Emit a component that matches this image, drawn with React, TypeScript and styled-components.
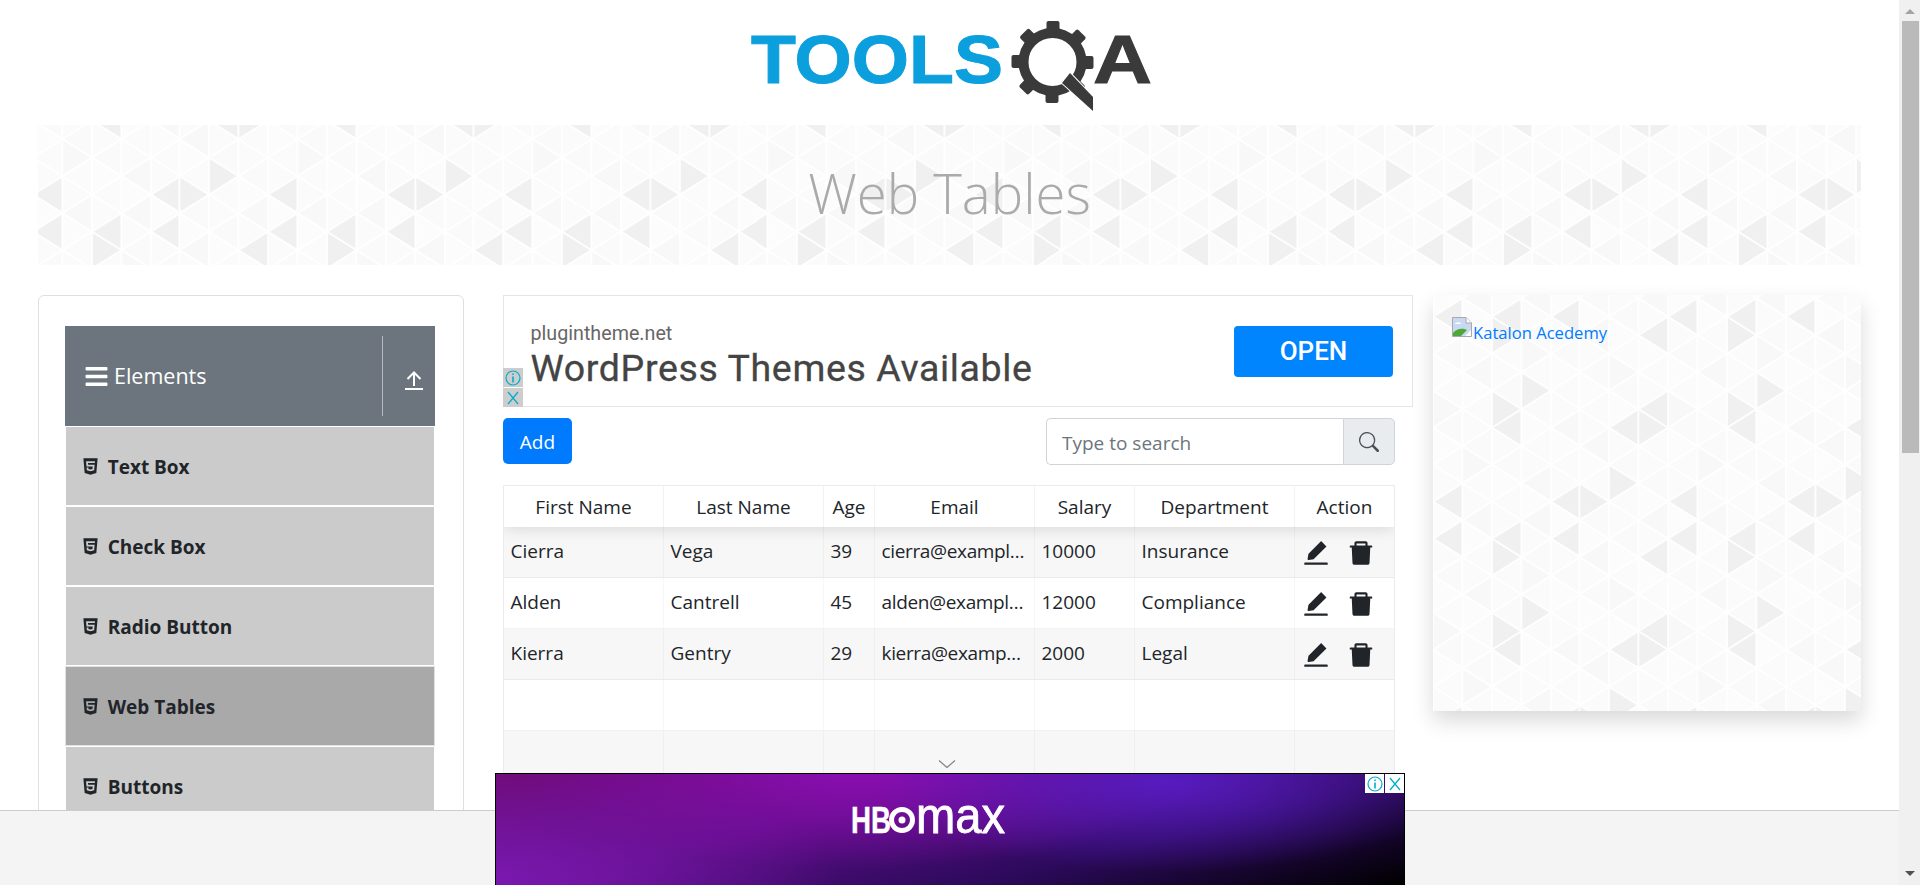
import React from "react";
import styled, { createGlobalStyle } from "styled-components";
import { FaBars, FaHtml5 } from "react-icons/fa";
import { AiFillEdit, AiFillDelete } from "react-icons/ai";
import { BsSearch } from "react-icons/bs";

const UI = `"Open Sans", "Noto Sans", sans-serif`;

const buildTile = () => {
  const cw = 29.4;
  const rh = 18.5;
  const r0 = 21.7;
  const dark = new Set(["0,0", "2,0", "4,0", "3,4", "2,5", "2,6", "6,6", "7,6", "0,10", "4,10", "5,10", "6,9", "2,1", "7,1", "7,5"]);
  const mid = new Set(["1,3", "3,2", "5,7", "1,8", "3,9", "6,3", "0,5", "4,6", "7,11", "5,1", "1,11", "3,11"]);
  let polys = "";
  for (let c = 0; c < 8; c++) {
    for (let r = -1; r < 13; r++) {
      const y = r0 + rh * r;
      const x0 = c * cw;
      const x1 = x0 + cw;
      const rr = (r + 12) % 12;
      const key = `${c},${rr}`;
      const shade = (c * 7 + rr * 5) % 4;
      const fill = dark.has(key) ? "#f0f0f0" : mid.has(key) ? "#f8f8f8" : ["#fbfbfb", "#fbfbfb", "#fafafa", "#fcfcfc"][shade];
      const pts = (r + c) % 2 === 0
        ? `${x0},${y} ${x1},${y - rh} ${x1},${y + rh}`
        : `${x0},${y - rh} ${x0},${y + rh} ${x1},${y}`;
      polys += `<polygon points='${pts}' fill='${fill}'/>`;
    }
  }
  const svg = `<svg xmlns='http://www.w3.org/2000/svg' width='235.2' height='222' viewBox='0 0 235.2 222'><rect width='235.2' height='222' fill='#fbfbfb'/><g stroke='#ffffff' stroke-opacity='0.85' stroke-width='1.8' stroke-linejoin='round'>${polys}</g></svg>`;
  return `url("data:image/svg+xml,${encodeURIComponent(svg)}")`;
};
const tile = buildTile();

const Global = createGlobalStyle`
  html, body { margin: 0; padding: 0; height: 100%; overflow: hidden; background: #fff; }
  body { font-family: ${UI}; color: #212529; }
  * { box-sizing: border-box; }
`;

const Viewport = styled.div`
  display: flex;
  height: 885px;
  width: 1920px;
  overflow: hidden;
`;
const Page = styled.div`
  position: relative;
  flex: 0 0 1899px;
  height: 885px;
  overflow: hidden;
`;
const Scrollbar = styled.div`
  flex: 0 0 21px;
  background: #f0f0f0;
  display: flex;
  flex-direction: column;
  align-items: center;
  padding: 0 0 0 1px;
`;
const ScrollArrow = styled.div<{ $down?: boolean }>`
  width: 0;
  height: 0;
  border-left: 5px solid transparent;
  border-right: 5px solid transparent;
  ${(p) => (p.$down ? "border-top: 5px solid #505050; margin-top: 418px;" : "border-bottom: 5px solid #a3a3a3; margin: 9px 0 7px;")}
`;
const ScrollThumb = styled.div`
  width: 17px;
  height: 432px;
  background: #bababa;
`;

const Header = styled.header`
  height: 125px;
  padding: 21px 0 0 4px;
  display: flex;
  justify-content: center;
  align-items: flex-start;
`;
const LogoText = styled.text<{ $dark?: boolean }>`
  font-family: "Liberation Sans", sans-serif;
  font-weight: 700;
  font-size: 69px;
  fill: ${(p) => (p.$dark ? "#3a3a3a" : "#0b9fdd")};
  stroke: ${(p) => (p.$dark ? "#3a3a3a" : "#0b9fdd")};
  stroke-width: 1;
`;

const Banner = styled.div`
  margin: 0 38px;
  height: 140px;
  background-image: ${tile};
  background-position: -5px 85px;
  display: flex;
  align-items: center;
  justify-content: center;
  padding-bottom: 4px;
`;
const Title = styled.h1`
  margin: 0;
  font-family: ${UI};
  font-weight: 300;
  font-size: 54.5px;
  line-height: 1;
  color: #aaaaaa;
`;

const Main = styled.main`
  display: grid;
  grid-template-columns: 426px 949px 448px;
  padding: 30px 0 0 38px;
`;

const Sidebar = styled.aside`
  border: 1px solid #dfdfdf;
  border-radius: 6px;
  padding: 30px 28px 0 26px;
  height: 700px;
`;
const GroupHeader = styled.div`
  height: 100px;
  background: #6c757d;
  color: #fff;
  display: flex;
  align-items: center;
  padding-left: 19px;
  font-size: 21.5px;
`;
const GroupLabel = styled.span`
  flex: 1;
  margin-left: 5px;
  line-height: 1;
`;
const GroupToggle = styled.div`
  flex: 0 0 53px;
  height: 80px;
  border-left: 1px solid rgba(255, 255, 255, 0.5);
  display: flex;
  align-items: center;
  padding: 8px 0 0 22px;
`;
const Items = styled.ul`
  list-style: none;
  margin: 0;
  padding: 0;
  display: flex;
  flex-direction: column;
`;
const Item = styled.li<{ $active?: boolean }>`
  display: flex;
  align-items: center;
  gap: 7.7px;
  font-weight: 700;
  font-size: 19px;
  color: #212529;
  background: ${(p) => (p.$active ? "#a9a9a9" : "#cbcbcb")};
  height: ${(p) => (p.$active ? "80px" : "78px")};
  margin: ${(p) => (p.$active ? "0" : "1px")};
  padding-left: 15px;
  border: ${(p) => (p.$active ? "1px solid #dee2e6" : "0")};
  & > span { padding-top: 2px; }
`;

const Middle = styled.section`
  margin-left: 39px;
  width: 910px;
  display: flex;
  flex-direction: column;
`;
const AdTop = styled.div`
  position: relative;
  height: 112px;
  border: 1px solid #e6e6e6;
  display: flex;
  align-items: center;
  justify-content: space-between;
  padding: 0 19px 0 26.5px;
  font-family: Roboto, sans-serif;
`;
const AdText = styled.div`
  display: flex;
  flex-direction: column;
  margin-top: 10px;
`;
const AdDomain = styled.span`
  font-size: 19.7px;
  line-height: 22px;
  color: #666;
`;
const AdHeadline = styled.span`
  font-size: 37.5px;
  letter-spacing: 0.63px;
  line-height: 44px;
  color: #444;
  margin-top: 1px;
  -webkit-text-stroke: 0.3px #444;
`;
const AdOpen = styled.div`
  width: 159px;
  height: 51px;
  border-radius: 4px;
  background: #0085ff;
  color: #fff;
  font-size: 26px;
  font-weight: 500;
  display: flex;
  align-items: center;
  justify-content: center;
`;
const AdTopMarks = styled.div`
  position: absolute;
  left: -1px;
  bottom: -1px;
  display: flex;
  flex-direction: column;
  gap: 1px;
`;
const AdMark = styled.div<{ $light?: boolean }>`
  width: ${(p) => (p.$light ? "19px" : "20px")};
  height: 19px;
  background: ${(p) => (p.$light ? "#fff" : "#cdcdcd")};
  display: flex;
  align-items: center;
  justify-content: center;
`;

const Toolbar = styled.div`
  width: 892px;
  margin-top: 11px;
  display: flex;
  justify-content: space-between;
  align-items: flex-start;
`;
const AddButton = styled.button`
  width: 69px;
  height: 46px;
  border: 0;
  border-radius: 5px;
  background: #007bff;
  color: #fff;
  font-family: ${UI};
  font-size: 19px;
  padding: 1px 0 0;
`;
const Search = styled.div`
  width: 349px;
  height: 47px;
  display: flex;
`;
const SearchInput = styled.input`
  flex: 1;
  min-width: 0;
  border: 1px solid #ced4da;
  border-right: 0;
  border-radius: 5px 0 0 5px;
  padding: 2px 16px 0 15px;
  font-family: ${UI};
  font-size: 19px;
  outline: 0;
  &::placeholder { color: #6c757d; opacity: 1; }
`;
const SearchAddon = styled.div`
  flex: 0 0 52px;
  background: #e9ecef;
  border: 1px solid #ced4da;
  border-radius: 0 5px 5px 0;
  display: flex;
  align-items: center;
  justify-content: center;
  color: #495057;
`;

const Table = styled.div`
  position: relative;
  width: 892px;
  margin-top: 20px;
  border: 1px solid rgba(0, 0, 0, 0.08);
  border-bottom: 0;
  font-size: 19px;
  overflow: hidden;
`;
const HeadRow = styled.div`
  position: relative;
  z-index: 1;
  display: flex;
  height: 41px;
  background: #fff;
  box-shadow: 0 2px 15px rgba(0, 0, 0, 0.13);
`;
const HeadCell = styled.div<{ $w: number }>`
  flex: 0 0 ${(p) => p.$w}px;
  display: flex;
  align-items: center;
  justify-content: center;
  padding-top: 1px;
  border-right: 1px solid rgba(0, 0, 0, 0.05);
  &:last-child { border-right: 0; }
`;
const Row = styled.div<{ $odd?: boolean }>`
  display: flex;
  height: 51px;
  background: ${(p) => (p.$odd ? "#f7f7f7" : "#fff")};
  border-bottom: 1px solid rgba(0, 0, 0, 0.05);
`;
const Cell = styled.div<{ $w: number; $tight?: boolean }>`
  flex: 0 0 ${(p) => p.$w}px;
  min-width: 0;
  padding: 0 6px 0 6.5px;
  line-height: 48px;
  white-space: nowrap;
  letter-spacing: ${(p) => (p.$tight ? "-0.35px" : "0")};
  border-right: 1px solid rgba(0, 0, 0, 0.03);
  &:last-child { border-right: 0; }
`;
const Actions = styled.div<{ $w: number }>`
  flex: 0 0 ${(p) => p.$w}px;
  display: flex;
  align-items: center;
  gap: 15px;
  padding: 2px 0 0 6px;
`;
const Chevron = styled.svg`
  position: absolute;
  left: 434px;
  top: 274px;
  z-index: 1;
`;

const Aside = styled.aside`
  margin-left: 20px;
  width: 428px;
  height: 416px;
  background-image: ${tile};
  box-shadow: 0 10px 20px rgba(0, 0, 0, 0.15);
  padding: 22px 19px;
`;
const PromoLink = styled.a`
  display: flex;
  align-items: flex-start;
  color: #007bff;
  font-size: 16.6px;
  line-height: 26px;
  text-decoration: none;
  & > span { margin: 3px 0 0 1px; }
`;

const Footer = styled.footer`
  position: absolute;
  left: 0;
  right: 0;
  bottom: 0;
  z-index: 2;
  height: 75px;
  background: #f4f4f4;
  border-top: 1px solid #cccccc;
  display: flex;
  justify-content: center;
  align-items: flex-end;
`;
const AdBottom = styled.div`
  position: relative;
  flex: 0 0 910px;
  margin-left: 1px;
  height: 112px;
  border: 1px solid #000;
  border-bottom: 0;
  padding: 13px 0 0 355px;
  background:
    radial-gradient(ellipse 32% 80% at 74% 8%, rgba(88, 28, 196, 0.95) 0%, rgba(88, 28, 196, 0) 100%),
    radial-gradient(ellipse 38% 90% at 40% -5%, rgba(140, 14, 178, 1) 0%, rgba(140, 14, 178, 0) 100%),
    radial-gradient(ellipse 38% 110% at 0% 95%, rgba(122, 24, 174, 1) 0%, rgba(122, 24, 174, 0) 100%),
    linear-gradient(165deg, #700a72 0%, #5c0d84 35%, #2c0a5c 68%, #000 100%);
`;
const HboText = styled.text<{ $thin?: boolean }>`
  font-family: "Liberation Sans", sans-serif;
  font-weight: ${(p) => (p.$thin ? 400 : 700)};
  font-size: ${(p) => (p.$thin ? "50px" : "36px")};
  fill: #fff;
  stroke: #fff;
  stroke-width: ${(p) => (p.$thin ? 0.8 : 0.4)};
`;
const AdCorner = styled.div`
  position: absolute;
  top: 0;
  right: 0;
  display: flex;
  gap: 1px;
`;

const InfoGlyph = () => (
  <svg width="16" height="16" viewBox="0 0 16 16" fill="none" stroke="#00aecd" strokeWidth="1.2">
    <circle cx="8" cy="8" r="7" />
    <path d="M8 6.5V12.5M8 3.5V5" strokeWidth="1.6" />
  </svg>
);
const CloseGlyph = () => (
  <svg width="14" height="16" viewBox="0 0 14 16" fill="none" stroke="#00aecd" strokeWidth="1.3">
    <path d="M2 2L12 14M12 2L2 14" />
  </svg>
);

const COLS = [160, 160, 51, 160, 100, 160, 99];
const HEADS = ["First Name", "Last Name", "Age", "Email", "Salary", "Department", "Action"];
const DATA = [
  ["Cierra", "Vega", "39", "cierra@exampl…", "10000", "Insurance"],
  ["Alden", "Cantrell", "45", "alden@exampl…", "12000", "Compliance"],
  ["Kierra", "Gentry", "29", "kierra@examp…", "2000", "Legal"],
];
const MENU = ["Text Box", "Check Box", "Radio Button", "Web Tables", "Buttons"];

const Logo = () => (
  <svg width="402" height="92" viewBox="0 0 402 92">
    <LogoText x="0" y="62" textLength="252" lengthAdjust="spacingAndGlyphs">TOOLS</LogoText>
    <g fill="#3a3a3a">
      {[0, 45, 90, 135, 180, 225, 270, 315].map((a) => (
        <rect key={a} x="295.5" y="0" width="13" height="14" rx="2" transform={`rotate(${a} 301.5 41)`} />
      ))}
    </g>
    <circle cx="301.5" cy="41" r="29" fill="none" stroke="#3a3a3a" strokeWidth="10" />
    <polygon points="319,52 342,76 342,90 311,62" fill="#3a3a3a" stroke="#fff" strokeWidth="2" paintOrder="stroke" />
    <LogoText $dark x="342" y="62" textLength="59" lengthAdjust="spacingAndGlyphs">A</LogoText>
  </svg>
);

const Broken = () => (
  <svg width="20" height="20" viewBox="0 0 20 20" style={{ flex: "none" }}>
    <path d="M0.5 0.5H14L19.5 6V19.5H0.5Z" fill="#c9d9f2" stroke="#a8a8a8" />
    <path d="M14 0.5V6H19.5" fill="#fff" stroke="#a8a8a8" />
    <path d="M3 7a2 1.2 0 0 1 6 0Z" fill="#fff" />
    <path d="M1 19V16C5 11 11 11 15 13L9 19Z" fill="#4da83a" />
    <path d="M13 19L19 13V19Z" fill="#fff" />
  </svg>
);

export default function App() {
  return (
    <Viewport>
      <Global />
      <Page>
        <Header>
          <Logo />
        </Header>
        <Banner>
          <Title>Web Tables</Title>
        </Banner>
        <Main>
          <Sidebar>
            <GroupHeader>
              <FaBars size={25} />
              <GroupLabel>Elements</GroupLabel>
              <GroupToggle>
                <svg width="18" height="19" viewBox="0 0 18 19" fill="none" stroke="#fff" strokeWidth="2">
                  <path d="M9 1.5V15M2.5 8L9 1.5L15.5 8M0 18H18" />
                </svg>
              </GroupToggle>
            </GroupHeader>
            <Items>
              {MENU.map((m) => (
                <Item key={m} $active={m === "Web Tables"}>
                  <FaHtml5 size={19} />
                  <span>{m}</span>
                </Item>
              ))}
            </Items>
          </Sidebar>
          <Middle>
            <AdTop>
              <AdText>
                <AdDomain>plugintheme.net</AdDomain>
                <AdHeadline>WordPress Themes Available</AdHeadline>
              </AdText>
              <AdOpen>OPEN</AdOpen>
              <AdTopMarks>
                <AdMark><InfoGlyph /></AdMark>
                <AdMark><CloseGlyph /></AdMark>
              </AdTopMarks>
            </AdTop>
            <Toolbar>
              <AddButton>Add</AddButton>
              <Search>
                <SearchInput placeholder="Type to search" />
                <SearchAddon><BsSearch size={20} /></SearchAddon>
              </Search>
            </Toolbar>
            <Table>
              <HeadRow>
                {HEADS.map((h, i) => (
                  <HeadCell key={h} $w={COLS[i]}>{h}</HeadCell>
                ))}
              </HeadRow>
              {DATA.map((d, r) => (
                <Row key={d[0]} $odd={r % 2 === 0}>
                  {d.map((v, i) => (
                    <Cell key={i} $w={COLS[i]} $tight={i === 3}>{v}</Cell>
                  ))}
                  <Actions $w={COLS[6]}>
                    <AiFillEdit size={30} />
                    <AiFillDelete size={30} />
                  </Actions>
                </Row>
              ))}
              {[3, 4].map((r) => (
                <Row key={r} $odd={r % 2 === 0}>
                  {COLS.map((w, i) => (
                    <Cell key={i} $w={w} />
                  ))}
                </Row>
              ))}
              <Chevron width="18" height="8" viewBox="0 0 18 8" fill="none" stroke="#888" strokeWidth="1.3">
                <path d="M1 0.5L9 7.5L17 0.5" />
              </Chevron>
            </Table>
          </Middle>
          <Aside>
            <PromoLink href="#">
              <Broken />
              <span>Katalon Acedemy</span>
            </PromoLink>
          </Aside>
        </Main>
        <Footer>
          <AdBottom>
            <svg width="154" height="60" viewBox="0 -20 154 60">
              <HboText x="0" y="26" textLength="40" lengthAdjust="spacingAndGlyphs">HB</HboText>
              <circle cx="51" cy="13" r="10.5" fill="none" stroke="#fff" strokeWidth="5" />
              <circle cx="51" cy="13" r="3.5" fill="#fff" />
              <HboText $thin x="65" y="26" textLength="89" lengthAdjust="spacingAndGlyphs">max</HboText>
            </svg>
            <AdCorner>
              <AdMark $light><InfoGlyph /></AdMark>
              <AdMark $light><CloseGlyph /></AdMark>
            </AdCorner>
          </AdBottom>
        </Footer>
      </Page>
      <Scrollbar>
        <ScrollArrow />
        <ScrollThumb />
        <ScrollArrow $down />
      </Scrollbar>
    </Viewport>
  );
}
